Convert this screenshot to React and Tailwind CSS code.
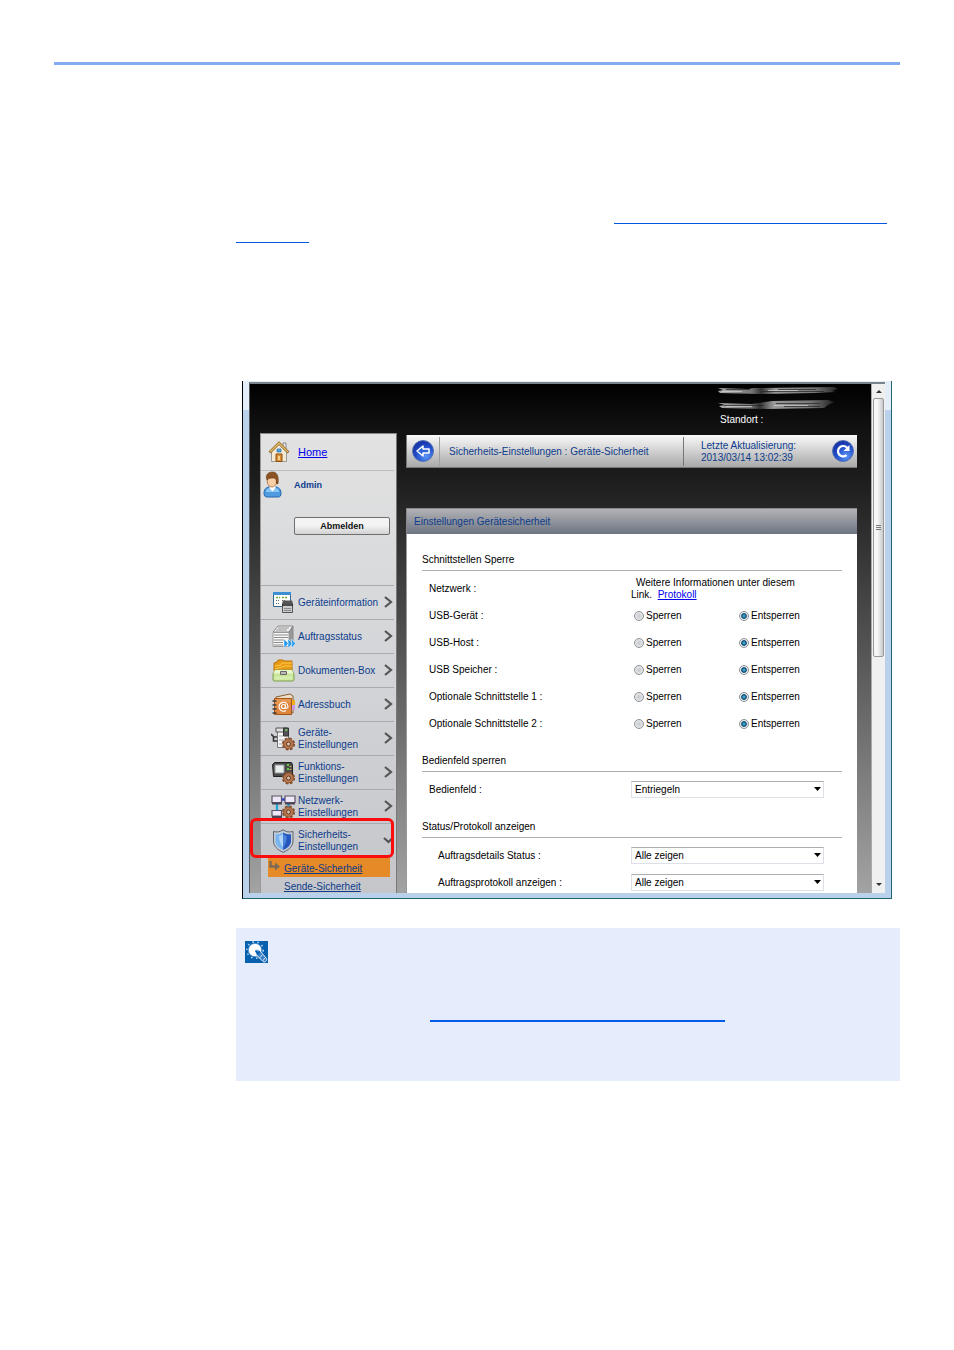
import React, { useState } from "react";

const ports = ["USB-Gerät", "USB-Host", "USB Speicher", "Optionale Schnittstelle 1", "Optionale Schnittstelle 2"];

const menu = [
  { lines: ["Geräteinformation"], icon: InfoIcon },
  { lines: ["Auftragsstatus"], icon: JobsIcon },
  { lines: ["Dokumenten-Box"], icon: BoxIcon },
  { lines: ["Adressbuch"], icon: BookIcon },
  { lines: ["Geräte-", "Einstellungen"], icon: DeviceIcon },
  { lines: ["Funktions-", "Einstellungen"], icon: FunctionIcon },
  { lines: ["Netzwerk-", "Einstellungen"], icon: NetworkIcon },
  { lines: ["Sicherheits-", "Einstellungen"], icon: ShieldIcon, open: true },
];

export default function App() {
  return (
    <div className="min-h-screen bg-white px-[54px] pt-[62px] pb-12 font-['Liberation_Sans',Arial,sans-serif] text-[10px] leading-3 text-black">
      <header className="h-[3px] bg-[#84abf2]" />
      <main className="ml-[182px]">
        <div className="pt-[158px]">
          <a href="#kapitel" aria-label="Kapitel" className="ml-auto mr-[13px] block h-px w-[273px] bg-[#0058e0]" />
          <a href="#kapitel" aria-label="Kapitel, Seite" className="mt-[18px] block h-px w-[73px] bg-[#0058e0]" />
        </div>

        <BrowserWindow />

        <aside className="mt-[29px] bg-[#e5edfc] pt-[13px] pb-[59px] pl-[9px]">
          <NoteIcon />
          <a href="#hinweis" aria-label="Hinweis" className="mt-[57px] ml-[185px] block h-[2px] w-[295px] bg-[#005cec]" />
        </aside>
      </main>
    </div>
  );
}

function BrowserWindow() {
  return (
    <section className="mt-[138px] mr-2 ml-[6px] border-r border-b border-l border-r-[#1f6672] border-b-[#1f6672] border-l-black bg-[linear-gradient(#e4eef8_0_29px,#b9d1ea_29px)] px-[6px] pt-px pb-[5px]">
      <div className="flex border-t-2 border-l border-t-[#7b848d] border-l-[#555]">
        <div className="min-w-0 flex-1 overflow-hidden bg-[linear-gradient(#000,#101010_8%,#1c1c1c_18%,#3a3a3a_36%,#707070_69%,#a3a3a3)] pr-[14px] pl-[10px]">
          <div className="flex h-[49px] justify-end pr-[19px]">
            <div className="w-[120px] pt-[2px] text-white">
              <Smear />
              <p className="mt-[2px] pl-[2px]">Standort :</p>
            </div>
          </div>
          <div className="flex gap-[9px]">
            <Sidebar />
            <Content />
          </div>
        </div>
        <Scrollbar />
      </div>
    </section>
  );
}

function Sidebar() {
  return (
    <nav className="w-[137px] shrink-0 border-t border-r border-l border-t-[#888] border-r-[#777] border-l-[#999] bg-linear-to-b from-[#e2e2e2] via-[#d3d5d8] to-[#c4c6c9] pr-[2px] text-[#0d3c8c]">
      <div className="flex h-9 items-center pl-[7px]">
        <HomeIcon />
        <a href="#home" className="ml-[8px] text-[11px] text-[#0000f0] underline">
          Home
        </a>
      </div>
      <div className="h-[115px] border-t border-[#bcbcbe] pl-[2px]">
        <div className="flex items-center">
          <UserIcon />
          <strong className="ml-[11px] text-[9px]">Admin</strong>
        </div>
        <button
          type="button"
          className="mt-[18px] ml-[31px] block h-[18px] w-[96px] rounded-xs border border-[#6f6f6f] bg-linear-to-b from-[#f4f4f4] from-45% to-[#d2d2d2] text-[9px] leading-3 font-bold text-[#111]"
        >
          Abmelden
        </button>
      </div>
      {menu.map((item) => (
        <MenuItem key={item.lines.join("")} item={item} />
      ))}
      <div className="border-t border-[#b3b5b9] pr-[4px] pl-[7px]">
        <div className="flex h-[19px] items-center bg-[#e58a27]">
          <svg width="16" height="12" viewBox="0 0 16 12" className="mb-1">
            <path d="M2.500 1v5.500h6" fill="none" stroke="#7d6a55" strokeWidth="2.400" />
            <path d="M7 2.500l5 4-5 4z" fill="#7d6a55" />
          </svg>
          <a href="#geraete-sicherheit" className="pt-[3px] underline">
            Geräte-Sicherheit
          </a>
        </div>
        <a href="#sende-sicherheit" className="ml-4 block h-4 pt-[4px] underline">
          Sende-Sicherheit
        </a>
      </div>
    </nav>
  );
}

function MenuItem({ item }) {
  const Icon = item.icon;
  return (
    <a href="#menu" className="relative flex h-[34px] items-center border-t border-[#a9abb0] pl-[10px]">
      <Icon />
      <span className="ml-[2px] flex-1 whitespace-nowrap">
        {item.lines.map((line) => (
          <span key={line} className="block">
            {line}
          </span>
        ))}
      </span>
      <svg width="10" height="14" viewBox="0 0 10 14" fill="none" stroke="#555" strokeWidth="2.200" className="absolute right-px">
        {item.open ? <path d="M1 4l4.500 4L9 4.500" /> : <path d="M2 1l6 5-6 5" />}
      </svg>
      {item.open && <span className="absolute -top-[6px] right-0 -bottom-px -left-[11px] rounded-md border-[3px] border-[#fb0d0d]" />}
    </a>
  );
}

function Content() {
  return (
    <div className="mt-[2px] -mb-[4px] min-w-0 flex-1 text-black">
      <div className="flex h-[33px] items-center border-b border-l border-[#777] bg-linear-to-b from-[#fafafa] to-[#a9a9a9] pr-[3px] pl-[5px] text-[#0d3c8c]">
        <button type="button" aria-label="Zurück">
          <Ball>
            <path d="M5 11l6-5v3h6v4h-6v3z" fill="#2f63d8" stroke="#fff" strokeWidth="1.500" strokeLinejoin="round" />
          </Ball>
        </button>
        <h1 className="ml-[5px] flex h-[29px] flex-1 items-center border-l border-[#a0a0a0] pt-px pl-[9px]">
          Sicherheits-Einstellungen : Geräte-Sicherheit
        </h1>
        <p className="flex h-[29px] w-[149px] items-center border-l border-[#777] pt-px pl-[17px]">
          Letzte Aktualisierung:
          <br />
          2013/03/14 13:02:39
        </p>
        <button type="button" aria-label="Aktualisieren">
          <Ball>
            <path d="M14.500 15.200a5.200 5.200 0 1 1 .8-7.200" fill="none" stroke="#fff" strokeWidth="2.200" />
            <path d="M17.500 5v6h-6z" fill="#fff" />
          </Ball>
        </button>
      </div>

      <h2 className="mt-10 flex h-[26px] items-center border-t border-l border-[#888] bg-linear-to-b from-[#b3b3b6] to-[#6d7481] pl-[7px] text-[#0d3c8c]">
        Einstellungen Gerätesicherheit
      </h2>
      <div className="border-l border-[#999] bg-white px-[15px] pt-[2px]">
        <Group title="Schnittstellen Sperre">
          <Row label="Netzwerk">
            <p className="w-[180px]">
              <span className="pl-[5px]">Weitere Informationen unter diesem</span>
              <br />
              Link.&nbsp;{" "}
              <a href="#protokoll" className="text-[#0000f0] underline">
                Protokoll
              </a>
            </p>
          </Row>
          {ports.map((port) => (
            <RadioRow key={port} label={port} />
          ))}
        </Group>
        <Group title="Bedienfeld sperren">
          <Row label="Bedienfeld" htmlFor="panel">
            <Select id="panel" options={["Entriegeln", "Sperren"]} />
          </Row>
        </Group>
        <Group title="Status/Protokoll anzeigen">
          <Row label="Auftragsdetails Status" htmlFor="details" indent>
            <Select id="details" options={["Alle zeigen", "Alle ausblenden"]} />
          </Row>
          <Row label="Auftragsprotokoll anzeigen" htmlFor="log" indent>
            <Select id="log" options={["Alle zeigen", "Alle ausblenden"]} />
          </Row>
        </Group>
      </div>
    </div>
  );
}

function Group({ title, children }) {
  return (
    <section className="pt-[13px]">
      <h3 className="mb-[4px] flex h-[22px] items-center border-b border-[#aaacb2]">{title}</h3>
      {children}
    </section>
  );
}

function Row({ label, htmlFor, indent, children }) {
  return (
    <div className="grid h-[27px] grid-cols-[209px_1fr] items-center">
      <label htmlFor={htmlFor} className={indent ? "pl-4" : "pl-[7px]"}>
        {label} :
      </label>
      {children}
    </div>
  );
}

function RadioRow({ label }) {
  const [value, setValue] = useState("Entsperren");
  return (
    <Row label={label}>
      <div className="flex pl-[3px]">
        {["Sperren", "Entsperren"].map((option) => (
          <label key={option} className="flex w-[105px] items-center gap-[2px]">
            <input
              type="radio"
              name={label}
              checked={value === option}
              onChange={() => setValue(option)}
              className="size-[10px] appearance-none rounded-full border border-[#8e9196] bg-[radial-gradient(#c4c8cc,#f5f5f5)] checked:bg-[radial-gradient(circle,#3fa9d8_0_10%,#0d4468_42%,#e8eef2_58%)]"
            />
            {option}
          </label>
        ))}
      </div>
    </Row>
  );
}

function Select({ id, options }) {
  return (
    <div className="relative w-[193px]">
      <select
        id={id}
        className="block h-[17px] w-full appearance-none border border-[#dde0e6] border-t-[#abadb3] bg-white pl-[3px] text-[10px] leading-3"
      >
        {options.map((o) => (
          <option key={o}>{o}</option>
        ))}
      </select>
      <svg width="7" height="4" viewBox="0 0 7 4" className="pointer-events-none absolute top-[6px] right-[3px]">
        <path d="M0 0h7L3.500 4z" />
      </svg>
    </div>
  );
}

function Scrollbar() {
  return (
    <div className="flex w-[14px] flex-col items-center border-l border-[#aaa] bg-[#f0f0f0]">
      <div className="flex h-[14px] items-center">
        <svg width="6" height="3" viewBox="0 0 6 3">
          <path d="M0 3h6L3 0z" fill="#333" />
        </svg>
      </div>
      <div className="flex h-[259px] w-[11px] items-center justify-center rounded-xs border border-[#999] bg-linear-to-r from-[#f6f6f6] from-40% to-[#c9c9cc]">
        <svg width="5" height="6" viewBox="0 0 5 6">
          <path d="M0 .5h5M0 2.500h5M0 4.500h5" stroke="#777" />
        </svg>
      </div>
      <svg width="6" height="3" viewBox="0 0 6 3" className="mt-auto mb-[7px]">
        <path d="M0 0h6L3 3z" fill="#333" />
      </svg>
    </div>
  );
}

// model and host name, wiped out
function Smear() {
  return (
    <svg width="121" height="26" viewBox="0 0 121 26" aria-hidden="true" className="block">
      <defs>
        <linearGradient id="wipe">
          <stop offset="0" stopColor="#aaa" />
          <stop offset=".28" stopColor="#777" />
          <stop offset=".36" stopColor="#333" />
          <stop offset=".48" stopColor="#999" />
          <stop offset=".8" stopColor="#777" />
          <stop offset="1" stopColor="#222" />
        </linearGradient>
      </defs>
      <g fill="url(#wipe)">
        <path d="M0 2l30 1 6-1 80-1 4 2-6 2 4 1-20 1-58 1-38-1-2-2 5-1z" />
        <path d="M0 17l34 1 20-3 56-1 6 2-6 3-4 3-56 1-46-1-3-2 6-1z" />
      </g>
      <path d="M8 3.500h24M44 5.500h62M60 3.500h38M6 19.500h40M58 17.500h44M66 20.500h36" stroke="#222" opacity=".7" />
      <path d="M4 5.500h20M50 4.500h30M8 20.500h26M56 19.500h34" stroke="#ddd" opacity=".6" />
    </svg>
  );
}

function Ball({ children }) {
  return (
    <svg width="22" height="22" viewBox="0 0 22 22" className="block">
      <defs>
        <radialGradient id="ball" cx=".65" cy=".75" r=".75">
          <stop offset="0" stopColor="#5b95f5" />
          <stop offset=".6" stopColor="#2350cc" />
          <stop offset="1" stopColor="#1630a0" />
        </radialGradient>
      </defs>
      <circle cx="11" cy="11" r="10.500" fill="url(#ball)" stroke="#5674b5" />
      {children}
    </svg>
  );
}

function Icon({ children }) {
  return (
    <svg width="25" height="24" viewBox="0 0 25 24" fill="none" className="shrink-0">
      {children}
    </svg>
  );
}

function Gear() {
  return (
    <g>
      <circle cx="17.500" cy="17" r="5.600" stroke="#85502c" strokeWidth="2" strokeDasharray="2.600 1.800" />
      <circle cx="17.500" cy="17" r="5" fill="#b27650" stroke="#8f5430" />
      <circle cx="17.500" cy="17" r="2" fill="#d8c4b4" stroke="#70391a" />
    </g>
  );
}

function HomeIcon() {
  return (
    <svg width="22" height="24" viewBox="0 0 22 24" className="shrink-0">
      <path d="M15 3h3v6h-3z" fill="#eee" stroke="#888" />
      <path d="M3.500 12L11 4.500l7.500 7.500v9.500h-15z" fill="#f5ead0" stroke="#999" />
      <path d="M1.500 12.500L11 3l9.500 9.500" fill="none" stroke="#8a6428" strokeWidth="2.600" />
      <path d="M2 12L11 3.200l9 8.800" fill="none" stroke="#e9bd68" strokeWidth="1.200" />
      <path d="M9 9h4v3H9z" fill="#4aa6ea" stroke="#2c6ea8" strokeWidth=".7" />
      <path d="M8 14h6v7.500H8z" fill="#d99038" stroke="#8b4e12" />
      <path d="M10 16h2v4h-2z" fill="#f6d08a" />
    </svg>
  );
}

function UserIcon() {
  return (
    <svg width="20" height="28" viewBox="0 0 20 28" className="shrink-0">
      <path d="M1 22c0-5 4-6.500 8.500-6.500S18 17 18 22c0 3-1 4-3 4H4c-2 0-3-1-3-4z" fill="#4e9be2" stroke="#2667ae" />
      <path d="M3 21c0-3 2-4 6.500-4s6.500 1 6.500 4z" fill="#8cc6f4" />
      <path d="M6.500 14h6v3l-3 3.500-3-3.500z" fill="#fff" />
      <ellipse cx="9" cy="10" rx="4.800" ry="6" fill="#f8d0a8" stroke="#a86834" strokeWidth=".8" />
      <path d="M4 9C2 4 5 1 9.500 1S16 5 15 13l-2-1c1-3 0-4-2-5-3 0-5 0-7 2z" fill="#8c5324" stroke="#683810" strokeWidth=".6" />
    </svg>
  );
}

function InfoIcon() {
  return (
    <Icon>
      <path d="M2.500 1.500h17v14h-17z" fill="#fff" stroke="#36658f" />
      <path d="M2 1h18v3H2z" fill="#3b8fd2" />
      <path d="M5 6.500h4M11 6.500h6" stroke="#74a838" strokeWidth="1.500" strokeDasharray="2 1" />
      <path d="M5 9.500h4M5 12.500h3M11 9.500h3" stroke="#666" strokeDasharray="1 1" />
      <path d="M11.500 12.500h10v9h-10z" fill="#c9cbcd" stroke="#555" />
      <path d="M12 9.500h9l1 3H11z" fill="#555" />
      <path d="M11 14h11" stroke="#222" strokeWidth="1.500" />
      <path d="M13 17.500h7M13 19.500h7" stroke="#888" />
    </Icon>
  );
}

function JobsIcon() {
  return (
    <Icon>
      <path d="M2 7l5-6h15l-4 6z" fill="#f5f5f5" stroke="#888" />
      <path d="M18 7l4-6v14l-4 7z" fill="#999" stroke="#888" />
      <path d="M2 7.500h16v14H2z" fill="#f7f7f7" stroke="#999" />
      <path d="M7 3h11M5 5h11M3 10h14M3 12.500h14M3 15h10M3 17.500h9M3 20h9" stroke="#8c8c8c" strokeWidth="1.200" />
      <path d="M13 14l4.500 4.500L13 23zM17 14l4.500 4.500L17 23zM20.500 14l4 4.500-4 4.500z" fill="#2897ee" stroke="#d8ecfb" strokeWidth=".6" />
    </Icon>
  );
}

function BoxIcon() {
  return (
    <Icon>
      <path d="M3 12V4l3-1 1-2h5l1 1h8v10z" fill="#e89a14" stroke="#bd7508" />
      <path d="M4 7l6-1 1-2h10M4 10l7-2 2-1h8" stroke="#ffcb4a" />
      <path d="M4 11h17l2 4v6l-1 1H3l-1-1v-6z" fill="#c8e59a" stroke="#7d9f50" />
      <path d="M4 11h17l1.500 3.500H2.500z" fill="#eaf7cb" />
      <path d="M9.500 12.500h6v3h-6z" fill="#bbb" stroke="#666" />
      <path d="M4 19h17" stroke="#d6efae" strokeWidth="3" />
    </Icon>
  );
}

function BookIcon() {
  return (
    <Icon>
      <path d="M5 4l14-3 3 2v17H5z" fill="#f0dfc8" stroke="#8a5c30" />
      <path d="M21 7h3v5h-3z" fill="#f2ae18" />
      <path d="M21 12h3v5h-3z" fill="#c99ae6" />
      <path d="M3.500 5.500h17v16h-17z" fill="#dd853d" stroke="#a3561c" />
      <path d="M4 6h16v4C14 9 9 11 4 15z" fill="#e59650" />
      <path d="M1.500 8h4M1.500 12h4M1.500 16h4M1.500 20h4" stroke="#3d3d3d" strokeWidth="1.500" />
      <circle cx="12.500" cy="13.500" r="2" stroke="#fff" strokeWidth="1.200" />
      <path d="M14.500 11.500v3c0 1.500 2.500 1 2.500-1a4.500 4.500 0 1 0-2 4" stroke="#fff" strokeWidth="1.100" />
    </Icon>
  );
}

function DeviceIcon() {
  return (
    <Icon>
      <path d="M6.500 4.500h11v16h-11z" fill="#f4f4f4" stroke="#777" />
      <path d="M5 1h11v4H5z" fill="#e0e0e0" stroke="#555" />
      <path d="M12.500 1h5v8h-5z" fill="#555" stroke="#333" />
      <path d="M14 3h2.500" stroke="#72d35b" strokeWidth="1.500" />
      <path d="M0 7l3 3h3M2.500 10v4h4" stroke="#333" strokeWidth="1.600" />
      <path d="M8 9h4M8 13h7M8 17h4" stroke="#aaa" />
      <Gear />
    </Icon>
  );
}

function FunctionIcon() {
  return (
    <Icon>
      <path d="M1.500 3.500l2-2h17l1 2v11l-2 1h-17z" fill="#4a4a4a" stroke="#222" />
      <path d="M4 4h9v8H4z" fill="#e8eeee" stroke="#999" />
      <path d="M16 4h2M16 8h2" stroke="#61cf4c" strokeWidth="2" />
      <path d="M18.500 5.500h2M18.500 8.500h2" stroke="#d9b742" />
      <Gear />
    </Icon>
  );
}

function NetworkIcon() {
  return (
    <Icon>
      <path d="M6 9v6M17.500 9v5" stroke="#22a7dc" strokeWidth="2.400" />
      <path d="M10 4.500h4" stroke="#2643da" strokeWidth="2.400" />
      <path d="M1 1h9.500v6.500H1zM14 1h10v6.500H14zM1 15.500h9.500v5.500H1z" fill="#ede7f7" stroke="#5a5266" strokeWidth="1.200" />
      <path d="M1 8.500h10M14 8.500h10M1 22h10" stroke="#4b4456" strokeWidth="2" />
      <Gear />
    </Icon>
  );
}

function ShieldIcon() {
  return (
    <Icon>
      <path d="M12 .8C9 3 6 3.500 2.500 2.500V12c0 5 4 9 9.700 11.300C18 21 22 17 22 12V2.500C18 3.500 15 3 12 .8z" fill="#c4ccd6" stroke="#5a6470" />
      <path d="M12 3.500C10 5 7.500 5.500 4.500 5.200V12c0 4 3 7 7.700 9z" fill="#7ab4ef" />
      <path d="M12 3.500c2 1.500 5 2 8 1.700V12c0 4-3 7-7.800 9z" fill="#2556bd" />
      <path d="M8 7c2 0 3-1 4-2v13c-2-2-4-6-4-11z" fill="#c9e3fb" opacity=".7" />
      <path d="M12.200 5c1.500 1 2.500 2 3.500 2 0 5-1.500 9-3.500 11z" fill="#4f86dd" />
    </Icon>
  );
}

function NoteIcon() {
  return (
    <svg width="23" height="22" viewBox="0 0 23 22" className="block">
      <path d="M0 0h23v22H0z" fill="#0560ad" />
      <circle cx="10" cy="9" r="8.200" fill="none" stroke="#b5d3ee" strokeWidth="1.600" strokeDasharray="1.600 3.500" />
      <circle cx="10" cy="9" r="6.600" fill="#fff" stroke="#4d93d0" strokeWidth=".8" />
      <path d="M10 10c2-2 4-1 5 0l6.500 7.500c1 2-1.500 4.500-3.500 3L11.500 14z" fill="#3b80c4" stroke="#e6f1fb" strokeLinejoin="round" />
      <path d="M10.500 9.500l3 4M15 10.500l-3 3" stroke="#0560ad" strokeWidth="1.500" />
      <path d="M17.500 13.500l-3.500 4M20 17l-2.500 3" stroke="#cfe3f5" />
    </svg>
  );
}
